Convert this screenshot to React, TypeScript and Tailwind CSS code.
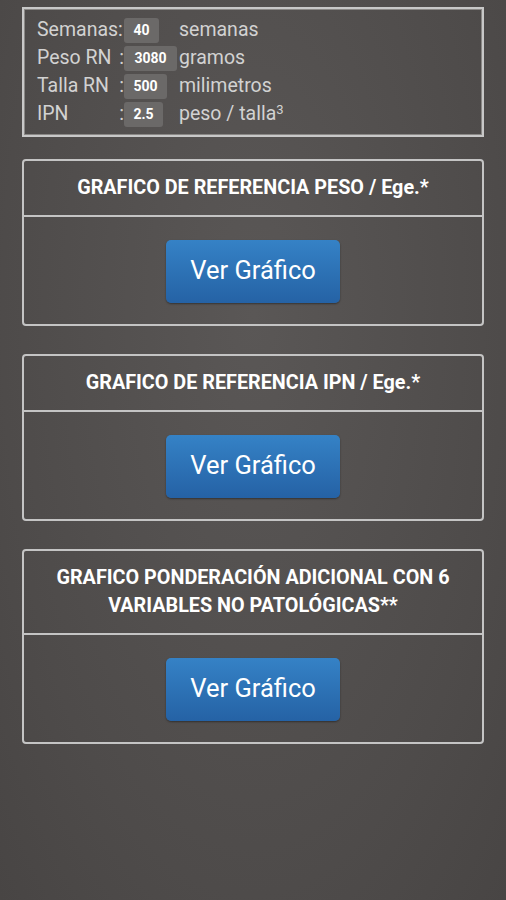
import React from "react";

const rows = [
  { label: "Semanas:", colon: "", value: "40", unit: "semanas", boxW: "w-[35px]" },
  { label: "Peso RN", colon: ":", value: "3080", unit: "gramos", boxW: "w-[53px]" },
  { label: "Talla RN", colon: ":", value: "500", unit: "milimetros", boxW: "w-[43px]" },
  { label: "IPN", colon: ":", value: "2.5", unit: "peso / talla", boxW: "w-[39px]" },
];

function ChartCard({ title }: { title: React.ReactNode }) {
  return (
    <div className="rounded-[4px] border-2 border-[#c4c4c4]">
      <div className="flex items-center justify-center border-b-2 border-[#c4c4c4] px-5 py-[13px] text-center text-[19.8px] font-bold leading-[28px] text-white">
        {title}
      </div>
      <div className="flex justify-center pb-[21px] pt-[23px]">
        <button className="h-[63px] w-[174px] rounded-[5px] bg-gradient-to-b from-[#3582c6] to-[#2562a5] pb-[3px] text-[25.5px] text-white shadow-[0_1px_2px_rgba(0,0,0,0.4)]">
          Ver Gráfico
        </button>
      </div>
    </div>
  );
}

export default function App() {
  return (
    <div
      className="h-[900px] w-[506px] overflow-hidden bg-[radial-gradient(ellipse_at_50%_35%,#5a5756_0%,#4e4b4a_70%,#484544_100%)] px-[22px] pt-[7px]"
      style={{ fontFamily: "Roboto, 'Noto Sans', sans-serif" }}
    >
      {/* Datos */}
      <div className="border-2 border-[#c8c8c8] px-[13px] py-[7px] shadow-[inset_0_0_0_1px_#8a8886]">
        {rows.map((r) => (
          <div key={r.label} className="flex h-[28px] items-center text-[19.5px] text-[#d2d2d2]">
            <span className="flex w-[87px] justify-between whitespace-nowrap">
              <span>{r.label}</span>
              <span>{r.colon}</span>
            </span>
            <span className="w-[55px] shrink-0">
              <span
                className={`${r.boxW} flex h-[25px] items-center justify-center rounded-[3px] bg-[#6b6968] text-[14px] font-bold text-white`}
              >
                {r.value}
              </span>
            </span>
            <span className="whitespace-nowrap">
              {r.unit}
              {r.label === "IPN" && <sup className="text-[13px]">3</sup>}
            </span>
          </div>
        ))}
      </div>

      <div className="mt-[22px] flex flex-col gap-[28px]">
        <ChartCard title="GRAFICO DE REFERENCIA PESO / Ege.*" />
        <ChartCard title="GRAFICO DE REFERENCIA IPN / Ege.*" />
        <ChartCard
          title={
            <span>
              GRAFICO PONDERACIÓN ADICIONAL CON 6
              <br />
              VARIABLES NO PATOLÓGICAS**
            </span>
          }
        />
      </div>
    </div>
  );
}
